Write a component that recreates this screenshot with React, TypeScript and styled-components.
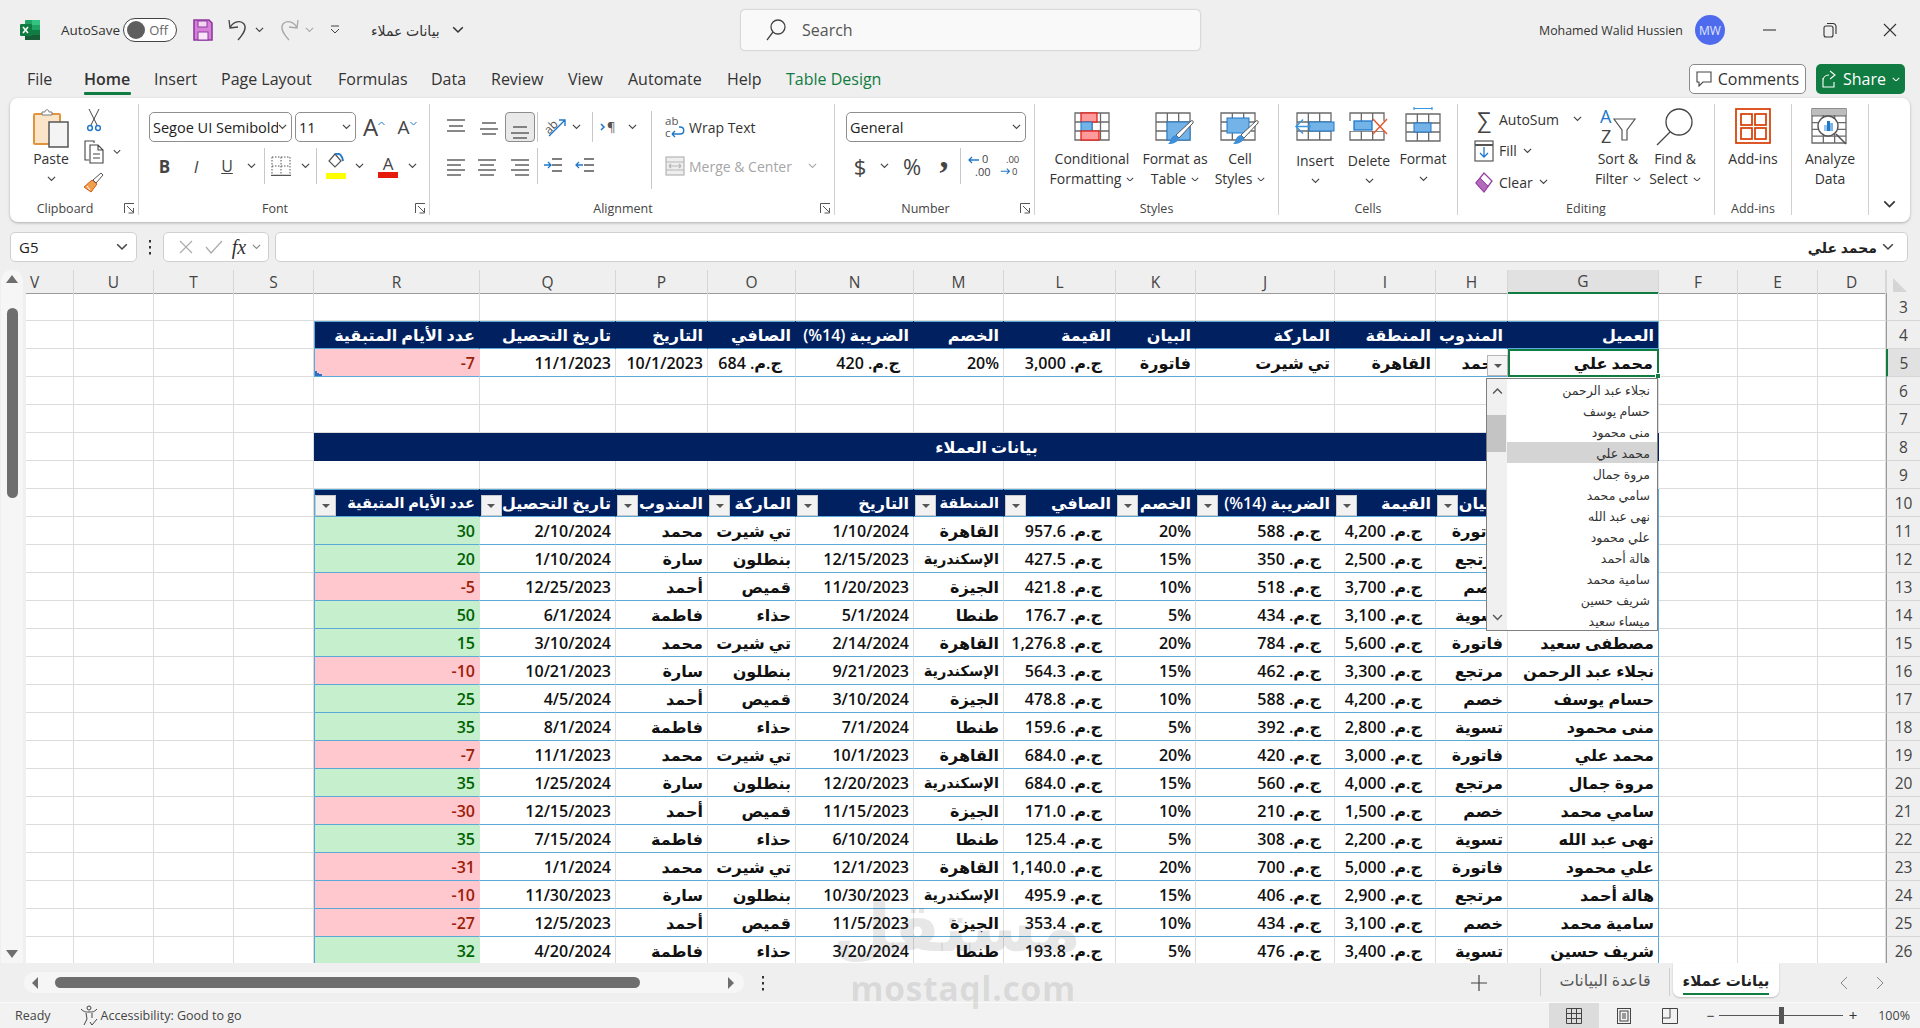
import React from 'react';
import styled, { createGlobalStyle, css } from 'styled-components';

const Global = createGlobalStyle`
  html, body { margin: 0; padding: 0; background: #efefef; }
  * { box-sizing: border-box; }
  body { font-family: "Open Sans", "DejaVu Sans", sans-serif; color: #262626; overflow: hidden; }
`;

const COLS = '48px 80px 80px 80px 166px 136px 92px 88px 118px 90px 112px 80px 139px 101px 72px 151px 79px 80px 68px 34px';
const BLUE = '#5aa9d6';
const NAVY = '#002060';

/* ---------- frame ---------- */
const Page = styled.div`
  position: relative; width: 1920px; height: 1028px; overflow: hidden;
  display: flex; flex-direction: column; background: #efefef;
`;
const TitleBar = styled.div`height: 60px; display: flex; align-items: center; padding-left: 20px; font-size: 13.5px;`;
const Gap = styled.div<{ $w: number; $h?: number }>`width: ${p => p.$w}px; flex: none; ${p => p.$h !== undefined && `height: ${p.$h}px;`}`;
const Grow = styled.div`flex: 1;`;
const AutoSaveLabel = styled.span`width: 58px; color: #333;`;
const Toggle = styled.div`
  width: 54px; height: 24px; border: 1px solid #444; border-radius: 12px; background: #fff;
  display: flex; align-items: center; justify-content: space-between; padding: 0 8px 0 3px; color: #666; font-size: 13px;
`;
const Knob = styled.div`width: 18px; height: 18px; border-radius: 50%; background: #5e5e5e;`;
const Slot = styled.div<{ $w: number; $on?: boolean }>`
  width: ${p => p.$w}px; flex: none; height: 100%; display: flex; align-items: center; justify-content: center;
  ${p => p.$on && css`background: #e9e9e9; border: 1px solid #8c8c8c; border-radius: 4px;`}
`;
const TitleSlot = styled(Slot)`height: 30px;`;
const DocName = styled.span`width: 80px; font-size: 14px; color: #333; direction: rtl; text-align: left; white-space: nowrap;`;
const SearchBox = styled.div`
  width: 459px; height: 40px; background: #f9f9f9; border-radius: 4px; box-shadow: 0 0 2px rgba(0,0,0,.35);
  display: flex; align-items: center; padding-left: 24px; gap: 15px; font-size: 16px; color: #555;
`;
const UserName = styled.span`font-size: 12.4px; color: #333; width: 156px; white-space: nowrap;`;
const Avatar = styled.div`
  width: 30px; height: 30px; border-radius: 50%; background: #4f6bed; color: #dfe6ff;
  display: flex; align-items: center; justify-content: center; font-size: 12px;
`;

const TabBar = styled.div`height: 38px; display: flex; align-items: center; padding-left: 27px;`;
const MenuTab = styled.div<{ $w: number; $on?: boolean; $green?: boolean }>`
  position: relative; width: ${p => p.$w}px; flex: none; font-size: 16px; line-height: 38px; height: 38px; white-space: nowrap;
  color: ${p => (p.$green ? '#107c41' : '#333')};
  font-weight: ${p => (p.$on ? 600 : 400)};
  ${p => p.$on && css`&::after { content: ''; position: absolute; left: 0; width: 47px; bottom: 3px; height: 3px; background: #107c41; border-radius: 1px; }`}
`;
const CommentsBtn = styled.div`
  width: 117px; height: 30px; background: #fff; border: 1px solid #8a8a8a; border-radius: 5px;
  display: flex; align-items: center; justify-content: center; gap: 6px; font-size: 16px; color: #333;
`;
const ShareBtn = styled.div`
  width: 89px; height: 30px; margin: 0 15px 0 10px; background: #107c41; border-radius: 5px; color: #fff;
  display: flex; align-items: center; justify-content: center; gap: 6px; font-size: 16px;
`;

/* ---------- ribbon ---------- */
const Ribbon = styled.div`
  height: 124px; margin: 0 10px; background: #fff; border-radius: 8px; box-shadow: 0 1px 3px rgba(0,0,0,.28); display: flex; flex: none;
`;
const Group = styled.div<{ $w: number; $last?: boolean }>`
  width: ${p => p.$w}px; flex: none; height: 111px; margin-top: 6px; display: flex; flex-direction: column;
  ${p => !p.$last && 'border-right: 1px solid #d0d0d0;'}
`;
const Body = styled.div<{ $pl?: number }>`height: 96px; padding: 8px 0 0 ${p => p.$pl ?? 0}px; display: flex; font-size: 14px; color: #333; white-space: nowrap;`;
const GroupLabel = styled.div<{ $launch?: boolean }>`
  position: relative; height: 15px; line-height: 18px; text-align: center; font-size: 12.5px; color: #444;
  padding-right: ${p => (p.$launch ? 18 : 0)}px;
`;
const Launcher = styled.span<{ $r: number }>`position: absolute; right: ${p => p.$r}px; top: 3px; line-height: 0;`;
const Stack = styled.div<{ $gap?: number }>`display: flex; flex-direction: column; gap: ${p => p.$gap ?? 8}px;`;
const RibRow = styled.div<{ $h: number }>`display: flex; align-items: center; height: ${p => p.$h}px;`;
const Combo = styled.div<{ $w: number }>`
  width: ${p => p.$w}px; height: 30px; flex: none; border: 1px solid #8f8f8f; border-radius: 5px; display: flex; align-items: center;
  padding: 0 4px 0 3px; font-size: 14.5px; color: #222;
`;
const ComboText = styled.span`flex: 1; overflow: hidden; white-space: nowrap;`;
const VSep = styled.div<{ $h: number }>`width: 1px; flex: none; height: ${p => p.$h}px; background: #c9c9c9;`;
const TallSep = styled(VSep)`margin-top: -1px;`;
const Glyph = styled.span<{ $s: number; $c?: string; $w?: number; $i?: boolean; $f?: string }>`
  font-size: ${p => p.$s}px; color: ${p => p.$c ?? '#333'}; font-weight: ${p => p.$w ?? 400}; font-style: ${p => (p.$i ? 'italic' : 'normal')};
  font-family: ${p => p.$f ?? 'inherit'}; line-height: 1;
`;
const ColorLetter = styled(Glyph)`display: block; text-align: center;`;
const CommaGlyph = styled(Glyph)`transform: translateY(-11px);`;
const Big = styled.div<{ $w: number }>`
  width: ${p => p.$w}px; flex: none; display: flex; flex-direction: column; align-items: center; text-align: center; line-height: 20px; white-space: nowrap;
  font-size: 14px;
`;
const BigIcon = styled.div<{ $h: number; $up?: number }>`
  height: ${p => p.$h}px; margin-top: ${p => -(p.$up ?? 0)}px; display: flex; justify-content: center; align-items: flex-start; flex: none;
`;
const LabelChev = styled.div`display: flex; align-items: center; gap: 5px; justify-content: center;`;
const ChevLine = styled.div`height: 20px; display: flex; align-items: center; justify-content: center;`;
const SmallCol = styled.div<{ $w: number; $top: number }>`width: ${p => p.$w}px; flex: none; margin-top: ${p => p.$top}px;`;
const SmallRow = styled.div<{ $h: number }>`height: ${p => p.$h}px; display: flex; align-items: center;`;
const MutedText = styled.span`color: #a6a6a6;`;
const CollapseBox = styled.div`flex: 1; display: flex; justify-content: center; align-items: flex-end; padding-bottom: 14px;`;

/* ---------- formula bar ---------- */
const FormulaBar = styled.div`height: 30px; margin: 10px 12px 8px 10px; display: flex; flex: none; align-items: center;`;
const FormulaPart = styled.div<{ $w?: number }>`
  ${p => (p.$w ? `width:${p.$w}px;flex:none;` : 'flex:1;')}
  height: 30px; background: #fff; border: 1px solid #d0d0d0; border-radius: 5px; display: flex; align-items: center; padding: 0 8px;
  font-size: 15px; color: #222;
`;
const FormulaText = styled.span`flex: 1; text-align: right; font-size: 14px; font-weight: 600; direction: rtl; padding-left: 8px;`;

/* ---------- sheet ---------- */
const SheetArea = styled.div`height: 693px; display: flex; flex: none;`;
const VScroll = styled.div`width: 26px; flex: none; display: flex; flex-direction: column; align-items: center; padding: 0 2px 0 0;`;
const VTrack = styled.div`
  width: 22px; height: 100%; background: #f6f6f6; border-radius: 10px 10px 0 0; display: flex; flex-direction: column; align-items: center;
`;
const ScrollThumbV = styled.div`width: 11px; height: 190px; margin-top: 22px; border-radius: 6px; background: #6e6e6e;`;
const Sheet = styled.div`flex: 1; position: relative; overflow: hidden; background: #fff;`;
const SheetRow = styled.div<{ $h?: number }>`display: grid; grid-template-columns: ${COLS}; height: ${p => p.$h ?? 28}px;`;
const ColHead = styled.div<{ $on?: boolean; $pr?: number }>`
  display: flex; align-items: center; justify-content: center; font-size: 15.5px; color: #444; background: ${p => (p.$on ? '#e1e1e1' : '#efefef')};
  border-right: 1px solid #d6d6d6; border-bottom: ${p => (p.$on ? '2px solid #107c41' : '1px solid #9a9a9a')};
  padding-right: ${p => p.$pr ?? 0}px;
`;
const Corner = styled.div`background: #efefef; border-bottom: 1px solid #9a9a9a; border-left: 1px solid #d6d6d6; padding: 8px 0 0 6px; line-height: 0;`;
const RowHead = styled.div<{ $on?: boolean }>`
  display: flex; align-items: center; justify-content: center; font-size: 15.5px; color: #444; background: ${p => (p.$on ? '#e1e1e1' : '#efefef')};
  border-bottom: 1px solid #d6d6d6; border-left: ${p => (p.$on ? '2px solid #107c41' : '1px solid #9a9a9a')};
`;
type CellP = { $head?: boolean; $tone?: 'good' | 'bad'; $line?: boolean; $top?: boolean; $first?: boolean; $last?: boolean; $money?: boolean; $tight?: boolean };
const Cell = styled.div<CellP>`
  position: relative; direction: rtl; display: flex; align-items: center; padding: 0 ${p => (p.$money ? 13 : 4)}px 0 2px; white-space: nowrap; overflow: hidden;
  font-size: ${p => (p.$tight ? 14.5 : 16)}px; font-weight: 600; color: #111;
  border-right: 1px solid #dcdcdc; border-bottom: 1px solid #dcdcdc;
  ${p => p.$line && `border-bottom-color: ${BLUE};`}
  ${p => p.$head && css`background: ${NAVY}; color: #fff; border-right-color: ${NAVY};`}
  ${p => p.$tone === 'good' && css`background: #c6efce; color: #006100; border-right-color: #c6efce;`}
  ${p => p.$tone === 'bad' && css`background: #ffc7ce; color: #9c2006; border-right-color: #ffc7ce;`}
  ${p => p.$last && `border-right-color: ${BLUE};`}
  ${p => (p.$top || p.$first) && `box-shadow: inset ${p.$first ? '1px' : '0'} ${p.$top ? '1px' : '0'} 0 ${BLUE}${p.$top && p.$first ? `, inset 0 1px 0 ${BLUE}` : ''};`}
`;
const Signed = styled.span`direction: ltr; unicode-bidi: isolate;`;
const ActiveCell = styled(Cell)`overflow: visible; z-index: 3; border: none; box-shadow: inset 0 0 0 2px #107c41; padding-right: 6px;`;
const FillHandle = styled.span`position: absolute; right: -2px; bottom: -2px; width: 6px; height: 6px; background: #107c41; border: 1px solid #fff;`;
const Banner = styled.div`
  grid-column: 5 / span 12; background: ${NAVY}; color: #fff; display: flex; align-items: center; justify-content: center;
  font-size: 16px; font-weight: 600; direction: rtl;
`;
const FilterBtn = styled.span`
  width: 21px; height: 21px; flex: none; margin: 6px auto 0 -1px; background: #f2f2f2; border: 1px solid #c9c9c9; display: flex; align-items: center; justify-content: center;
`;
const Arrow = styled.span`width: 0; height: 0; border-left: 4px solid transparent; border-right: 4px solid transparent; border-top: 4px solid #555;`;
const CellFilter = styled.span`
  position: absolute; right: 100%; top: 6px; width: 21px; height: 21px; background: #f4f4f4; border: 1px solid #b5b5b5;
  display: flex; align-items: center; justify-content: center;
`;
const Dropdown = styled.div`
  position: absolute; right: 1px; top: calc(100% + 1px); width: 172px; height: 253px; background: #fff; border: 1px solid #7f7f7f; display: flex; z-index: 5;
  font-weight: 400; color: #333; direction: ltr;
`;
const DropScroll = styled.div`width: 20px; flex: none; background: #f0f0f0; display: flex; flex-direction: column; align-items: center; justify-content: space-between; padding: 9px 0;`;
const FlipUp = styled.span`display: flex; transform: rotate(180deg);`;
const DropThumb = styled.div`width: 19px; height: 37px; background: #c4c4c4; position: absolute; left: 0; top: 36px;`;
const DropList = styled.div`flex: 1; direction: rtl;`;
const DropItem = styled.div<{ $on?: boolean }>`
  height: 21px; line-height: 23px; padding-right: 7px; font-size: 12.5px; background: ${p => (p.$on ? '#d4d4d4' : 'transparent')}; white-space: nowrap;
`;
const Marker = styled.span`position: absolute; left: 1px; bottom: 0; line-height: 0;`;

/* ---------- bottom ---------- */
const SheetBar = styled.div`height: 39px; flex: none; display: flex; align-items: flex-start; padding-left: 24px;`;
const HTrack = styled.div`
  width: 720px; height: 21px; margin-top: 9px; flex: none; background: #f6f6f6; border-radius: 10px; display: flex; align-items: center; padding: 0 6px;
`;
const HThumb = styled.div`width: 585px; height: 11px; margin: 0 auto 0 13px; border-radius: 6px; background: #6e6e6e;`;
const BarSlot = styled(Slot)`height: 39px;`;
const BarSep = styled.div`width: 1px; height: 28px; margin-top: 5px; background: #cfcfcf; flex: none;`;
const SheetTab = styled.div<{ $w: number; $on?: boolean }>`
  width: ${p => p.$w}px; flex: none; direction: rtl; text-align: center; position: relative;
  height: ${p => (p.$on ? 34 : 39)}px; line-height: 34px; font-size: ${p => (p.$on ? 15 : 16)}px; font-weight: ${p => (p.$on ? 700 : 400)};
  color: ${p => (p.$on ? '#222' : '#555')};
  ${p => p.$on && css`
    background: #fff; border-radius: 0 0 7px 7px; box-shadow: 0 1px 2px rgba(0,0,0,.2);
    &::after { content: ''; position: absolute; left: 10px; right: 10px; bottom: 2px; height: 2.5px; background: #107c41; }
  `}
`;
const StatusBar = styled.div`
  height: 26px; flex: none; border-top: 1px solid #fafafa; background: #f2f2f2; display: flex; align-items: center; font-size: 12.5px; color: #444; padding-left: 15px;
`;
const ViewBtn = styled.div<{ $w: number; $on?: boolean }>`
  width: ${p => p.$w}px; height: 25px; flex: none; display: flex; align-items: center; justify-content: center; background: ${p => (p.$on ? '#dcdcdc' : 'transparent')};
`;
const ZoomTrack = styled.div`position: relative; width: 124px; height: 1px; background: #555; flex: none;`;
const ZoomKnob = styled.span`position: absolute; left: 60px; top: -8px; width: 5px; height: 17px; background: #555;`;
const Pct = styled.span`font-size: 12.5px; margin-left: 21px;`;
const Watermark = styled.div`
  position: absolute; left: 845px; top: 880px; width: 236px; text-align: center; pointer-events: none; z-index: 9; color: rgba(70,70,70,.13); font-weight: 700;
`;
const MarkAr = styled.div`font-size: 68px; line-height: 90px; direction: rtl; white-space: nowrap;`;
const MarkEn = styled.div`font-size: 34px; line-height: 36px; letter-spacing: 0.5px; white-space: nowrap;`;

/* ---------- icons ---------- */
const Chev = ({ c = '#444', w = 9 }: { c?: string; w?: number }) => (
  <svg width={w} height={w * 0.6} viewBox="0 0 10 6" fill="none"><path d="M1 1l4 4 4-4" stroke={c} strokeWidth="1.3" /></svg>
);
const Launch = () => (
  <svg width="11" height="11" viewBox="0 0 11 11" fill="none" stroke="#555"><path d="M.5 10V.5H10M3 3l6 6M9.5 5v5h-5" /></svg>
);
const Lines = ({ ys, w = 20, h = 24, xs }: { ys: number[]; w?: number; h?: number; xs?: [number, number][] }) => (
  <svg width={w} height={h} viewBox={`0 0 ${w} ${h}`} stroke="#555" strokeWidth="1.4">
    {ys.map((y, i) => <path key={i} d={`M${xs ? xs[i][0] : 1} ${y}H${xs ? xs[i][1] : w - 1}`} />)}
  </svg>
);
const GridL = ({ x, y, w, h, c, r }: { x: number; y: number; w: number; h: number; c: number; r: number }) => {
  const d: string[] = [`M${x} ${y}h${w}v${h}h${-w}z`];
  for (let i = 1; i < c; i++) d.push(`M${x + (w * i) / c} ${y}v${h}`);
  for (let i = 1; i < r; i++) d.push(`M${x} ${y + (h * i) / r}h${w}`);
  return <path d={d.join('')} fill="none" stroke="#6a6a6a" strokeWidth="1.3" />;
};
const Brush = () => (
  <g>
    <path d="M36 9c1-1 3 0 2 2L24 26l-3-3z" fill="#fff" stroke="#555" />
    <path d="M21 23l3 3c-1 4-5 6-11 6 3-2 2-8 8-9z" fill="#3f8fd8" />
  </g>
);
const ExcelLogo = () => (
  <svg width="20" height="20" viewBox="0 0 20 20">
    <rect x="5" y="0" width="15" height="20" rx="1" fill="#21a366" />
    <rect x="12" y="10" width="8" height="5" fill="#107c41" /><rect x="5" y="10" width="7" height="5" fill="#185c37" />
    <rect x="5" y="15" width="15" height="5" fill="#185c37" /><rect x="12" y="0" width="8" height="5" fill="#33c481" />
    <rect x="0" y="4" width="12" height="12" rx="1" fill="#107c41" />
    <path d="M3 7l5 6M8 7l-5 6" stroke="#fff" strokeWidth="1.6" />
  </svg>
);
const SaveIcon = () => (
  <svg width="20" height="24" viewBox="0 0 20 24">
    <path d="M1 2h15l3 3v17H1z" fill="#d77fd9" stroke="#8e3a9e" strokeWidth="1.6" />
    <rect x="5" y="3" width="9" height="6" fill="#f4d6f4" stroke="#8e3a9e" /><rect x="5" y="14" width="10" height="8" fill="#f8e6f8" stroke="#8e3a9e" />
  </svg>
);
const Undo = ({ c }: { c: string }) => (
  <svg width="20" height="24" viewBox="0 0 20 24" fill="none" stroke={c} strokeWidth="1.3">
    <path d="M1 2l1 8 8-1M2 10C5 3 13 2 16 6c3 4 0 9-6 16" />
  </svg>
);
const Redo = ({ c }: { c: string }) => (
  <svg width="20" height="24" viewBox="0 0 20 24" fill="none" stroke={c} strokeWidth="1.3">
    <path d="M19 2l-1 8-8-1M18 10C15 3 7 2 4 6c-3 4 0 9 6 16" />
  </svg>
);
const PasteIcon = () => (
  <svg width="36" height="40" viewBox="0 0 36 40" fill="none">
    <rect x="1" y="6" width="26" height="30" rx="1" fill="#fbe5c8" stroke="#e0953c" strokeWidth="2" />
    <path d="M9 7V4h3c0-3 4-3 4 0h3v3z" fill="#fff" stroke="#7a7a7a" />
    <rect x="16" y="14" width="19" height="25" fill="#f4f4f4" stroke="#555" strokeWidth="1.5" />
  </svg>
);
const CutIcon = () => (
  <svg width="14" height="24" viewBox="0 0 14 24" fill="none" stroke="#444">
    <path d="M2 1l8 16M12 1L4 17" /><circle cx="3" cy="20" r="2.4" stroke="#1f78c8" strokeWidth="1.5" /><circle cx="11" cy="20" r="2.4" stroke="#1f78c8" strokeWidth="1.5" />
  </svg>
);
const CopyIcon = () => (
  <svg width="20" height="24" viewBox="0 0 20 24" fill="none" stroke="#444" strokeWidth="1.1">
    <path d="M10 3V1H1v19h4" /><path d="M6 5h8l5 5v13H6zM14 5v5h5M9 14h7M9 18h7" fill="#fff" />
  </svg>
);
const PainterIcon = () => (
  <svg width="20" height="22" viewBox="0 0 20 22">
    <path d="M8 8l5 4-6 8-7-5z" fill="#f0a04a" stroke="#d35a16" /><path d="M9 8l8-7 2 2-7 8z" fill="#fff" stroke="#555" /><path d="M3 14l3 4" stroke="#fff" />
  </svg>
);
const BorderIcon = () => (
  <svg width="20" height="20" viewBox="0 0 20 20" fill="none" stroke="#555" strokeDasharray="1.5 1.5">
    <path d="M1 1h18M1 10h18M1 1v18M10 1v18M19 1v18" /><path d="M0 19.5h20" strokeDasharray="none" strokeWidth="1.5" />
  </svg>
);
const ColorBar = ({ c }: { c: string }) => <svg width="20" height="6" display="block"><rect width="20" height="6" fill={c} /></svg>;
const Bucket = () => (
  <svg width="20" height="16" viewBox="0 0 20 16" fill="none">
    <path d="M9 1l6 7-6 6-6-6z" stroke="#555" strokeWidth="1.2" /><path d="M9 1c5-1 7 1 8 7" stroke="#1f78c8" strokeWidth="2" />
  </svg>
);
const Indent = ({ flip }: { flip?: boolean }) => (
  <svg width="20" height="20" viewBox="0 0 20 20" fill="none" stroke="#555" strokeWidth="1.3">
    <path d="M9 3h10M9 9h10M9 15h10" /><path d={flip ? 'M8 9H1m3-3L1 9l3 3' : 'M1 9h7M5 6l3 3-3 3'} stroke="#1f78c8" />
  </svg>
);
const OrientIcon = () => (
  <svg width="24" height="24" viewBox="0 0 24 24" fill="none">
    <text x="1" y="16" fontSize="12" fill="#555" transform="rotate(-45 8 12)" fontFamily="Open Sans">ab</text>
    <path d="M6 21L22 5M16 5h6v6" stroke="#1f78c8" strokeWidth="1.4" />
  </svg>
);
const RtlIcon = () => (
  <svg width="20" height="18" viewBox="0 0 20 18"><path d="M1 6l3 3-3 3" fill="none" stroke="#1f78c8" strokeWidth="1.5" /><text x="7" y="14" fontSize="13" fill="#555" fontFamily="Open Sans">¶</text></svg>
);
const WrapIcon = () => (
  <svg width="22" height="26" viewBox="0 0 22 26"><text x="1" y="11" fontSize="11.5" fill="#555" fontFamily="Open Sans">ab</text><text x="1" y="23" fontSize="11.5" fill="#555" fontFamily="Open Sans">c</text>
    <path d="M8 20h8c5 0 5-7 0-7h-1M8 20l3-3M8 20l3 3" fill="none" stroke="#1f78c8" strokeWidth="1.4" /></svg>
);
const MergeIcon = () => (
  <svg width="20" height="20" viewBox="0 0 20 20" fill="#eee" stroke="#b5b5b5" strokeWidth="1.2"><rect x="1" y="1" width="18" height="18" /><path d="M1 6h18M1 14h18M4 10h12M4 10l2-2M4 10l2 2M16 10l-2-2M16 10l-2 2" /></svg>
);
const DecIcon = ({ more }: { more?: boolean }) => (
  <svg width="30" height="28" viewBox="0 0 30 28" fontFamily="Open Sans" fontSize="11" fill="#444">
    <text x={more ? 15 : 8} y="11">{more ? '0' : '.00'}</text><text x={more ? 8 : 15} y="24">{more ? '.00' : '0'}</text>
    <path d={more ? 'M12 8H2m3-3L2 8l3 3' : 'M2 20h10m-3-3l3 3-3 3'} fill="none" stroke="#1f78c8" strokeWidth="1.3" />
  </svg>
);
const CFIcon = () => (
  <svg width="36" height="30" viewBox="0 0 36 30">
    <GridL x={1} y={1} w={34} h={27} c={4} r={3} />
    <rect x="7" y="1" width="16" height="9" fill="#ff9b9b" stroke="#e8201a" strokeWidth="1.3" />
    <rect x="7" y="10" width="11" height="9" fill="#74b3e8" stroke="#1f78c8" />
    <rect x="7" y="19" width="18" height="9" fill="#ff9b9b" stroke="#e8201a" strokeWidth="1.3" />
  </svg>
);
const FATIcon = () => (
  <svg width="40" height="36" viewBox="0 0 40 36">
    <GridL x={1} y={1} w={34} h={27} c={3} r={3} />
    <rect x="12" y="10" width="23" height="18" fill="#74b3e8" stroke="#1f78c8" /><Brush />
  </svg>
);
const CSIcon = () => (
  <svg width="40" height="36" viewBox="0 0 40 36">
    <GridL x={1} y={1} w={34} h={27} c={3} r={3} />
    <rect x="7" y="6" width="22" height="15" fill="#74b3e8" stroke="#1f78c8" /><Brush />
  </svg>
);
const InsertIcon = () => (
  <svg width="40" height="30" viewBox="0 0 40 30">
    <GridL x={2} y={1} w={34} h={27} c={3} r={3} />
    <rect x="14" y="10" width="25" height="9" fill="#74b3e8" stroke="#1f78c8" />
    <path d="M16 14.5H2m6-7l-7 7 7 7" fill="none" stroke="#3a95e0" strokeWidth="1.5" />
  </svg>
);
const DeleteIcon = () => (
  <svg width="40" height="30" viewBox="0 0 40 30">
    <GridL x={1} y={1} w={34} h={27} c={3} r={3} />
    <rect x="0" y="9" width="39" height="10" fill="#fff" />
    <rect x="5" y="9" width="18" height="9" fill="#74b3e8" stroke="#1f78c8" strokeWidth="1.3" />
    <path d="M24 7l14 15M38 7L24 22" stroke="#e8562a" strokeWidth="1.4" />
  </svg>
);
const FormatIcon = () => (
  <svg width="36" height="36" viewBox="0 0 36 36">
    <GridL x={1} y={8} w={34} h={27} c={3} r={3} />
    <rect x="9" y="17" width="17" height="9" fill="#74b3e8" stroke="#1f78c8" />
    <path d="M9 1v3M27 1v3M9 2.5h18" stroke="#3a95e0" strokeWidth="1.2" />
  </svg>
);
const FillIcon = () => (
  <svg width="20" height="22" viewBox="0 0 20 22" fill="none"><rect x="1" y="1" width="18" height="20" stroke="#555" strokeWidth="1.2" /><path d="M1 5h18" stroke="#555" strokeWidth="2" /><path d="M10 7v10m-4-4l4 4 4-4" stroke="#1f78c8" strokeWidth="1.3" /></svg>
);
const ClearIcon = () => (
  <svg width="20" height="24" viewBox="0 0 20 24"><path d="M2 13l8-10 8 8-8 11z" fill="#fff" stroke="#9a3fa6" strokeWidth="1.3" /><path d="M2 13l4-5 8 8-4 6z" fill="#b26cbb" stroke="#9a3fa6" /></svg>
);
const SortIcon = () => (
  <svg width="38" height="36" viewBox="0 0 38 36" fontFamily="Open Sans" fontSize="18">
    <text x="1" y="15" fill="#1f78c8">A</text><text x="2" y="35" fill="#444">Z</text>
    <path d="M15 11h21l-8 11v10l-5 0V22z" fill="#fff" stroke="#555" strokeWidth="1.2" />
  </svg>
);
const FindIcon = () => (
  <svg width="38" height="38" viewBox="0 0 38 38" fill="none" stroke="#444" strokeWidth="1.3"><circle cx="23" cy="14" r="13" /><path d="M14 24L1 37" /></svg>
);
const AddinsIcon = () => (
  <svg width="36" height="36" viewBox="0 0 36 36" fill="none" stroke="#d83b01" strokeWidth="1.7">
    <rect x="1" y="1" width="34" height="34" /><rect x="6" y="6" width="11" height="11" /><rect x="20" y="6" width="11" height="11" /><rect x="6" y="20" width="11" height="11" /><rect x="20" y="20" width="11" height="11" />
  </svg>
);
const AnalyzeIcon = () => (
  <svg width="38" height="37" viewBox="0 0 38 37">
    <GridL x={1} y={1} w={34} h={34} c={3} r={5} />
    <rect x="1" y="1" width="34" height="6" fill="#bdbdbd" />
    <circle cx="17" cy="18" r="10" fill="#fff" stroke="#555" strokeWidth="1.4" />
    <rect x="13" y="17" width="3" height="6" fill="#9cc6ee" /><rect x="16" y="13" width="3" height="10" fill="#1f78c8" /><rect x="19" y="15" width="3" height="8" fill="#7fb4e6" />
    <path d="M25 26l10 10" stroke="#555" strokeWidth="1.6" />
  </svg>
);
const SearchGlyph = () => (
  <svg width="22" height="24" viewBox="0 0 22 24" fill="none" stroke="#444" strokeWidth="1.3"><circle cx="13" cy="9" r="7" /><path d="M8 14l-6 8" /></svg>
);
const Tri = ({ d }: { d: 'u' | 'd' | 'l' | 'r' }) => {
  const p = { u: 'M0 9L6 1l6 8z', d: 'M0 1l6 8 6-8z', l: 'M8 0v12L2 6z', r: 'M2 0v12l6-6z' }[d];
  return <svg width="12" height="12" viewBox="0 0 12 12"><path d={p} fill="#6e6e6e" /></svg>;
};
const Dots = () => (
  <svg width="4" height="16" viewBox="0 0 4 16" fill="#333"><rect x="1" y="1" width="2" height="2.5" /><rect x="1" y="7" width="2" height="2.5" /><rect x="1" y="13" width="2" height="2.5" /></svg>
);
const WinBtn = ({ k, c = '#333' }: { k: 'min' | 'res' | 'x'; c?: string }) => (
  <svg width="16" height="16" viewBox="0 0 16 16" fill="none" stroke={c} strokeWidth="1.1">
    {k === 'min' && <path d="M1 8h13" />}
    {k === 'res' && <><rect x="2" y="4" width="9" height="11" rx="2" /><path d="M5 1.5h6a3 3 0 0 1 3 3V12" /></>}
    {k === 'x' && <path d="M2 2l12 12M14 2L2 14" />}
  </svg>
);
const CommentGlyph = () => (
  <svg width="16" height="16" viewBox="0 0 16 16" fill="none" stroke="#444" strokeWidth="1.1"><path d="M1 1h14v10H7l-4 4v-4H1z" /></svg>
);
const ShareGlyph = () => (
  <svg width="16" height="18" viewBox="0 0 16 18" fill="none" stroke="#fff" strokeWidth="1.1"><path d="M8 5c-4 0-6 3-6 6M9 1l5 4-5 4M2 8v9h11v-5" /></svg>
);
const A11y = () => (
  <svg width="20" height="22" viewBox="0 0 20 22" fill="none" stroke="#444"><circle cx="9" cy="3" r="2" /><path d="M1 4c3 3 4 3 8 3s5 0 8-3M6 8l1 6-3 6M12 8v5M10 17l2 3 5-6" /></svg>
);
const ViewGrid = () => (
  <svg width="16" height="16" viewBox="0 0 16 16" fill="none" stroke="#444"><path d="M.5.5h15v15H.5zM.5 5.500h15M.5 10.500h15M5.500.5v15M10.500.5v15" /></svg>
);
const ViewPage = () => (
  <svg width="14" height="16" viewBox="0 0 14 16" fill="none" stroke="#444"><rect x=".5" y=".5" width="13" height="15" /><rect x="3" y="3" width="8" height="10" /><path d="M5 6h4M5 8h4M5 10h4" /></svg>
);
const ViewBreak = () => (
  <svg width="16" height="16" viewBox="0 0 16 16" fill="none" stroke="#444"><path d="M.5.5h15v15H.5zM8 .5V10M.5 10h7.500" /></svg>
);

/* ---------- data ---------- */
const HEAD_TOP = ['العميل', 'المندوب', 'المنطقة', 'الماركة', 'البيان', 'القيمة', 'الخصم', 'الضريبة (14%)', 'الصافي', 'التاريخ', 'تاريخ التحصيل', 'عدد الأيام المتبقية'];
const HEAD_TBL = ['العميل', 'البيان', 'القيمة', 'الضريبة (14%)', 'الخصم', 'الصافي', 'المنطقة', 'التاريخ', 'الماركة', 'المندوب', 'تاريخ التحصيل', 'عدد الأيام المتبقية'];
const M = 'ج.م. ';
type Row = [string, string, string, string, string, string, string, string, string, string, string, number];
const ROWS: Row[] = [
  ['', 'فاتورة', '4,200', '588', '20%', '957.6', 'القاهرة', '1/10/2024', 'تي شيرت', 'محمد', '2/10/2024', 30],
  ['', 'مرتجع', '2,500', '350', '15%', '427.5', 'الإسكندرية', '12/15/2023', 'بنطلون', 'سارة', '1/10/2024', 20],
  ['', 'خصم', '3,700', '518', '10%', '421.8', 'الجيزة', '11/20/2023', 'قميص', 'أحمد', '12/25/2023', -5],
  ['', 'تسوية', '3,100', '434', '5%', '176.7', 'طنطا', '5/1/2024', 'حذاء', 'فاطمة', '6/1/2024', 50],
  ['مصطفى سعيد', 'فاتورة', '5,600', '784', '20%', '1,276.8', 'القاهرة', '2/14/2024', 'تي شيرت', 'محمد', '3/10/2024', 15],
  ['نجلاء عبد الرحمن', 'مرتجع', '3,300', '462', '15%', '564.3', 'الإسكندرية', '9/21/2023', 'بنطلون', 'سارة', '10/21/2023', -10],
  ['حسام يوسف', 'خصم', '4,200', '588', '10%', '478.8', 'الجيزة', '3/10/2024', 'قميص', 'أحمد', '4/5/2024', 25],
  ['منى محمود', 'تسوية', '2,800', '392', '5%', '159.6', 'طنطا', '7/1/2024', 'حذاء', 'فاطمة', '8/1/2024', 35],
  ['محمد علي', 'فاتورة', '3,000', '420', '20%', '684.0', 'القاهرة', '10/1/2023', 'تي شيرت', 'محمد', '11/1/2023', -7],
  ['مروة جمال', 'مرتجع', '4,000', '560', '15%', '684.0', 'الإسكندرية', '12/20/2023', 'بنطلون', 'سارة', '1/25/2024', 35],
  ['سامي محمد', 'خصم', '1,500', '210', '10%', '171.0', 'الجيزة', '11/15/2023', 'قميص', 'أحمد', '12/15/2023', -30],
  ['نهى عبد الله', 'تسوية', '2,200', '308', '5%', '125.4', 'طنطا', '6/10/2024', 'حذاء', 'فاطمة', '7/15/2024', 35],
  ['علي محمود', 'فاتورة', '5,000', '700', '20%', '1,140.0', 'القاهرة', '12/1/2023', 'تي شيرت', 'محمد', '1/1/2024', -31],
  ['هالة أحمد', 'مرتجع', '2,900', '406', '15%', '495.9', 'الإسكندرية', '10/30/2023', 'بنطلون', 'سارة', '11/30/2023', -10],
  ['سامية محمد', 'خصم', '3,100', '434', '10%', '353.4', 'الجيزة', '11/5/2023', 'قميص', 'أحمد', '12/5/2023', -27],
  ['شريف حسين', 'تسوية', '3,400', '476', '5%', '193.8', 'طنطا', '3/20/2024', 'حذاء', 'فاطمة', '4/20/2024', 32],
];
const LETTERS = ['V', 'U', 'T', 'S', 'R', 'Q', 'P', 'O', 'N', 'M', 'L', 'K', 'J', 'I', 'H', 'G', 'F', 'E', 'D'];
const LIST = ['نجلاء عبد الرحمن', 'حسام يوسف', 'منى محمود', 'محمد علي', 'مروة جمال', 'سامي محمد', 'نهى عبد الله', 'علي محمود', 'هالة أحمد', 'سامية محمد', 'شريف حسين', 'ميساء سعيد'];
const MENU: [string, number, boolean?, boolean?][] = [
  ['File', 57], ['Home', 70, true], ['Insert', 67], ['Page Layout', 117], ['Formulas', 93], ['Data', 60], ['Review', 77], ['View', 60], ['Automate', 99], ['Help', 59], ['Table Design', 100, false, true],
];

const Blanks = ({ n, k }: { n: number; k: string }) => <>{Array.from({ length: n }, (_, i) => <Cell key={k + i} />)}</>;

const Plain = ({ n }: { n: number }) => (
  <SheetRow><Blanks n={19} k="b" /><RowHead>{n}</RowHead></SheetRow>
);

const BigBtn = ({ w, h = 37, up, icon, l1, l2, chev, sub }: { w: number; h?: number; up?: number; icon: React.ReactNode; l1: string; l2?: string; chev?: boolean; sub?: boolean }) => (
  <Big $w={w}>
    <BigIcon $h={h} $up={up}>{icon}</BigIcon>
    {l2 ? <><div>{l1}</div><LabelChev>{l2}{chev && <Chev w={8} />}</LabelChev></> : (
      <LabelChev>{l1}{chev && !sub && <Chev w={8} />}</LabelChev>
    )}
    {sub && <ChevLine><Chev /></ChevLine>}
  </Big>
);

export default function App() {
  return (
    <Page>
      <Global />
      <TitleBar>
        <ExcelLogo />
        <Gap $w={21} />
        <AutoSaveLabel>AutoSave</AutoSaveLabel>
        <Gap $w={4} />
        <Toggle><Knob />Off</Toggle>
        <Gap $w={16} />
        <SaveIcon />
        <Gap $w={15} />
        <TitleSlot $w={20}><Undo c="#444" /></TitleSlot>
        <TitleSlot $w={22}><Chev /></TitleSlot>
        <Gap $w={8} />
        <TitleSlot $w={22}><Redo c="#a8a8a8" /></TitleSlot>
        <TitleSlot $w={18}><Chev c="#aaa" /></TitleSlot>
        <TitleSlot $w={34}>
          <svg width="10" height="10" viewBox="0 0 10 10" fill="none" stroke="#444"><path d="M1 1h8M1 4l4 4 4-4" /></svg>
        </TitleSlot>
        <Gap $w={19} />
        <DocName>بيانات عملاء</DocName>
        <TitleSlot $w={14}><Chev c="#333" w={12} /></TitleSlot>
        <Gap $w={276} />
        <SearchBox><SearchGlyph />Search</SearchBox>
        <Grow />
        <UserName>Mohamed Walid Hussien</UserName>
        <Avatar>MW</Avatar>
        <Gap $w={30} />
        <TitleSlot $w={30}><WinBtn k="min" /></TitleSlot>
        <Gap $w={30} />
        <TitleSlot $w={30}><WinBtn k="res" /></TitleSlot>
        <Gap $w={30} />
        <TitleSlot $w={30}><WinBtn k="x" /></TitleSlot>
        <Gap $w={15} />
      </TitleBar>

      <TabBar>
        {MENU.map(([t, w, on, g]) => <MenuTab key={t} $w={w} $on={on} $green={g}>{t}</MenuTab>)}
        <Grow />
        <CommentsBtn><CommentGlyph />Comments</CommentsBtn>
        <ShareBtn><ShareGlyph />Share<Chev c="#fff" w={8} /></ShareBtn>
      </TabBar>

      <Ribbon>
        <Group $w={129}>
          <Body $pl={17}>
            <Big $w={48}>
              <BigIcon $h={41} $up={4}><PasteIcon /></BigIcon>
              <div>Paste</div>
              <ChevLine><Chev /></ChevLine>
            </Big>
            <SmallCol $w={50} $top={-8}>
              <SmallRow $h={32}><Slot $w={38}><CutIcon /></Slot></SmallRow>
              <SmallRow $h={31}><Slot $w={38}><CopyIcon /></Slot><Slot $w={8}><Chev /></Slot></SmallRow>
              <SmallRow $h={31}><Slot $w={38}><PainterIcon /></Slot></SmallRow>
            </SmallCol>
          </Body>
          <GroupLabel $launch>Clipboard<Launcher $r={3}><Launch /></Launcher></GroupLabel>
        </Group>

        <Group $w={291}>
          <Body $pl={10}>
            <Stack>
              <RibRow $h={30}>
                <Combo $w={143}><ComboText>Segoe UI Semibold</ComboText><Chev /></Combo>
                <Gap $w={3} />
                <Combo $w={61}><ComboText>11</ComboText><Chev /></Combo>
                <Slot $w={36}><Glyph $s={24} $c="#444">A</Glyph><svg width="7" height="14" viewBox="0 0 7 14" fill="none"><path d="M.5 5L3.500 2l3 3" stroke="#1f78c8" /></svg></Slot>
                <Slot $w={30}><Glyph $s={19} $c="#444">A</Glyph><svg width="7" height="14" viewBox="0 0 7 14" fill="none"><path d="M.5 2L3.500 5l3-3" stroke="#1f78c8" /></svg></Slot>
              </RibRow>
              <RibRow $h={32}>
                <Slot $w={31}><Glyph $s={17} $w={700} $c="#444">B</Glyph></Slot>
                <Slot $w={32}><Glyph $s={17} $i $c="#444">I</Glyph></Slot>
                <Slot $w={30}><Glyph $s={16} $c="#444"><u>U</u></Glyph></Slot>
                <Slot $w={18}><Chev /></Slot>
                <Gap $w={4} /><VSep $h={36} /><Gap $w={3} />
                <Slot $w={26}><BorderIcon /></Slot>
                <Slot $w={22}><Chev /></Slot>
                <VSep $h={36} /><Gap $w={3} />
                <Slot $w={32}><div><Bucket /><ColorBar c="#ffff00" /></div></Slot>
                <Slot $w={14}><Chev /></Slot>
                <Gap $w={3} />
                <Slot $w={38}><div><ColorLetter $s={17} $c="#444">A</ColorLetter><ColorBar c="#e51b0b" /></div></Slot>
                <Slot $w={10}><Chev /></Slot>
              </RibRow>
            </Stack>
          </Body>
          <GroupLabel $launch>Font<Launcher $r={3}><Launch /></Launcher></GroupLabel>
        </Group>

        <Group $w={405}>
          <Body $pl={10}>
            <Stack>
              <RibRow $h={30}>
                <Slot $w={32}><Lines ys={[5, 11, 16]} xs={[[1, 19], [3, 17], [1, 19]]} /></Slot>
                <Slot $w={33}><Lines ys={[8, 14, 19]} xs={[[3, 17], [1, 19], [3, 17]]} /></Slot>
                <Slot $w={30} $on><Lines ys={[12, 18, 23]} xs={[[3, 17], [1, 19], [3, 17]]} /></Slot>
                <Gap $w={2} /><VSep $h={30} /><Gap $w={2} />
                <Slot $w={30}><OrientIcon /></Slot>
                <Slot $w={12}><Chev /></Slot>
                <Gap $w={10} /><VSep $h={30} />
                <Slot $w={34}><RtlIcon /></Slot>
                <Slot $w={10}><Chev /></Slot>
              </RibRow>
              <RibRow $h={32}>
                <Slot $w={31}><Lines ys={[6, 11, 16, 21]} xs={[[1, 19], [1, 15], [1, 19], [1, 15]]} /></Slot>
                <Slot $w={32}><Lines ys={[6, 11, 16, 21]} xs={[[1, 19], [3, 17], [1, 19], [3, 17]]} /></Slot>
                <Slot $w={34}><Lines ys={[6, 11, 16, 21]} xs={[[1, 19], [5, 19], [1, 19], [5, 19]]} /></Slot>
                <VSep $h={36} />
                <Slot $w={30}><Indent /></Slot>
                <Gap $w={2} />
                <Slot $w={30}><Indent flip /></Slot>
              </RibRow>
            </Stack>
            <Gap $w={14} />
            <TallSep $h={78} />
            <Gap $w={12} />
            <Stack>
              <RibRow $h={30}><Slot $w={22}><WrapIcon /></Slot><Gap $w={3} />Wrap Text</RibRow>
              <RibRow $h={32}><Slot $w={22}><MergeIcon /></Slot><Gap $w={3} /><MutedText>Merge &amp; Center</MutedText><Gap $w={16} /><Chev c="#aaa" /></RibRow>
            </Stack>
          </Body>
          <GroupLabel $launch>Alignment<Launcher $r={3}><Launch /></Launcher></GroupLabel>
        </Group>

        <Group $w={200}>
          <Body $pl={11}>
            <Stack>
              <RibRow $h={30}><Combo $w={180}><ComboText>General</ComboText><Chev /></Combo></RibRow>
              <RibRow $h={32}>
                <Slot $w={28}><Glyph $s={22} $c="#444">$</Glyph></Slot>
                <Slot $w={20}><Chev /></Slot>
                <Slot $w={36}><Glyph $s={22} $c="#444">%</Glyph></Slot>
                <Slot $w={28}><CommaGlyph $s={36} $w={700} $c="#444" $f='"Liberation Serif", serif'>,</CommaGlyph></Slot>
                <Gap $w={2} /><VSep $h={36} /><Gap $w={4} />
                <Slot $w={34}><DecIcon more /></Slot>
                <Slot $w={26}><DecIcon /></Slot>
              </RibRow>
            </Stack>
          </Body>
          <GroupLabel $launch>Number<Launcher $r={3}><Launch /></Launcher></GroupLabel>
        </Group>

        <Group $w={244}>
          <Body $pl={11}>
            <BigBtn w={92} icon={<CFIcon />} l1="Conditional" l2="Formatting" chev />
            <BigBtn w={74} icon={<FATIcon />} l1="Format as" l2="Table" chev />
            <BigBtn w={56} icon={<CSIcon />} l1="Cell" l2="Styles" chev />
          </Body>
          <GroupLabel>Styles</GroupLabel>
        </Group>

        <Group $w={179}>
          <Body $pl={9}>
            <BigBtn w={54} h={39} icon={<InsertIcon />} l1="Insert" sub />
            <BigBtn w={54} h={39} icon={<DeleteIcon />} l1="Delete" sub />
            <BigBtn w={54} h={43} up={6} icon={<FormatIcon />} l1="Format" sub />
          </Body>
          <GroupLabel>Cells</GroupLabel>
        </Group>

        <Group $w={257}>
          <Body $pl={14}>
            <SmallCol $w={118} $top={-9}>
              <SmallRow $h={32}><Slot $w={24}><Glyph $s={22} $c="#444">∑</Glyph></Slot><Gap $w={3} />AutoSum<Gap $w={14} /><Chev /></SmallRow>
              <SmallRow $h={31}><Slot $w={24}><FillIcon /></Slot><Gap $w={3} />Fill<Gap $w={6} /><Chev /></SmallRow>
              <SmallRow $h={32}><Slot $w={24}><ClearIcon /></Slot><Gap $w={3} />Clear<Gap $w={6} /><Chev /></SmallRow>
            </SmallCol>
            <BigBtn w={56} h={41} up={4} icon={<SortIcon />} l1="Sort &" l2="Filter" chev />
            <BigBtn w={58} h={41} up={4} icon={<FindIcon />} l1="Find &" l2="Select" chev />
          </Body>
          <GroupLabel>Editing</GroupLabel>
        </Group>

        <Group $w={77}>
          <Body><BigBtn w={76} h={41} up={4} icon={<AddinsIcon />} l1="Add-ins" /></Body>
          <GroupLabel>Add-ins</GroupLabel>
        </Group>

        <Group $w={77}>
          <Body><BigBtn w={76} h={41} up={4} icon={<AnalyzeIcon />} l1="Analyze" l2="Data" /></Body>
          <GroupLabel />
        </Group>

        <CollapseBox><Chev w={13} c="#333" /></CollapseBox>
      </Ribbon>

      <FormulaBar>
        <FormulaPart $w={127}><ComboText>G5</ComboText><Chev w={12} /></FormulaPart>
        <Slot $w={26}><Dots /></Slot>
        <FormulaPart $w={106}>
          <Slot $w={28}><WinBtn k="x" c="#aaa" /></Slot>
          <Slot $w={28}><svg width="18" height="14" viewBox="0 0 18 14" fill="none" stroke="#aaa" strokeWidth="1.2"><path d="M1 7l5 6L17 1" /></svg></Slot>
          <Slot $w={22}><Glyph $s={20} $i $c="#333" $f='"Liberation Serif", serif'>fx</Glyph></Slot>
          <Slot $w={12}><Chev c="#888" /></Slot>
        </FormulaPart>
        <Gap $w={6} />
        <FormulaPart><FormulaText>محمد علي</FormulaText><Slot $w={22}><Chev w={12} /></Slot></FormulaPart>
      </FormulaBar>

      <SheetArea>
        <VScroll>
          <VTrack>
            <Gap $w={0} $h={4} />
            <Tri d="u" />
            <ScrollThumbV />
            <Grow />
            <Tri d="d" />
            <Gap $w={0} $h={2} />
          </VTrack>
        </VScroll>
        <Sheet>
          <SheetRow $h={23}>
            {LETTERS.map(l => <ColHead key={l} $on={l === 'G'} $pr={l === 'V' ? 30 : 0}>{l}</ColHead>)}
            <Corner><svg width="14" height="14"><path d="M14 14H0V0z" fill="#d5d5d5" /></svg></Corner>
          </SheetRow>
          <Plain n={3} />

          <SheetRow>
            <Blanks n={4} k="l" />
            {[...HEAD_TOP].reverse().map((t, i) => <Cell key={i} $head $top $line $first={i === 0} $last={i === 11}>{t}</Cell>)}
            <Blanks n={3} k="r" />
            <RowHead>4</RowHead>
          </SheetRow>

          <SheetRow>
            <Blanks n={4} k="l" />
            <Cell $line $tone="bad" $first><Signed>-7</Signed><Marker><svg width="7" height="5"><path d="M0 0h2v2h2v1h3v2H0z" fill="#2f6fc4" /></svg></Marker></Cell>
            <Cell $line>11/1/2023</Cell>
            <Cell $line>10/1/2023</Cell>
            <Cell $line $money>{M}684</Cell>
            <Cell $line $money>{M}420</Cell>
            <Cell $line>20%</Cell>
            <Cell $line $money>{M}3,000</Cell>
            <Cell $line>فاتورة</Cell>
            <Cell $line>تي شيرت</Cell>
            <Cell $line>القاهرة</Cell>
            <Cell $line>محمد</Cell>
            <ActiveCell>
              محمد علي
              <FillHandle />
              <CellFilter><Arrow /></CellFilter>
              <Dropdown>
                <DropScroll>
                  <DropThumb />
                  <FlipUp><Chev c="#555" w={11} /></FlipUp>
                  <Chev c="#555" w={11} />
                </DropScroll>
                <DropList>
                  {LIST.map(n => <DropItem key={n} $on={n === 'محمد علي'}>{n}</DropItem>)}
                </DropList>
              </Dropdown>
            </ActiveCell>
            <Blanks n={3} k="r" />
            <RowHead $on>5</RowHead>
          </SheetRow>

          <Plain n={6} />
          <Plain n={7} />

          <SheetRow>
            <Blanks n={4} k="l" />
            <Banner>بيانات العملاء</Banner>
            <Blanks n={3} k="r" />
            <RowHead>8</RowHead>
          </SheetRow>

          <Plain n={9} />

          <SheetRow>
            <Blanks n={4} k="l" />
            {[...HEAD_TBL].reverse().map((t, i) => (
              <Cell key={i} $head $top $line $first={i === 0} $last={i === 11} $tight={i === 0 || i === 5}>{t}<FilterBtn><Arrow /></FilterBtn></Cell>
            ))}
            <Blanks n={3} k="r" />
            <RowHead>10</RowHead>
          </SheetRow>

          {ROWS.map((r, i) => {
            const last = r[11];
            return (
              <SheetRow key={i}>
                <Blanks n={4} k="l" />
                <Cell $line $first $tone={last < 0 ? 'bad' : 'good'}><Signed>{last}</Signed></Cell>
                <Cell $line>{r[10]}</Cell>
                <Cell $line>{r[9]}</Cell>
                <Cell $line>{r[8]}</Cell>
                <Cell $line>{r[7]}</Cell>
                <Cell $line $tight={r[6] === 'الإسكندرية'}>{r[6]}</Cell>
                <Cell $line $money>{M}{r[5]}</Cell>
                <Cell $line>{r[4]}</Cell>
                <Cell $line $money>{M}{r[3]}</Cell>
                <Cell $line $money>{M}{r[2]}</Cell>
                <Cell $line>{r[1]}</Cell>
                <Cell $line $last>{r[0]}</Cell>
                <Blanks n={3} k="r" />
                <RowHead>{11 + i}</RowHead>
              </SheetRow>
            );
          })}
        </Sheet>
      </SheetArea>

      <SheetBar>
        <HTrack><Tri d="l" /><HThumb /><Tri d="r" /></HTrack>
        <BarSlot $w={38}><Dots /></BarSlot>
        <Grow />
        <BarSlot $w={40}><svg width="16" height="16" viewBox="0 0 16 16" stroke="#444" strokeWidth="1.2"><path d="M8 0v16M0 8h16" /></svg></BarSlot>
        <Gap $w={41} />
        <BarSep />
        <SheetTab $w={128}>قاعدة البيانات</SheetTab>
        <BarSep />
        <Gap $w={3} />
        <SheetTab $w={106} $on>بيانات عملاء</SheetTab>
        <Gap $w={47} />
        <BarSlot $w={36}><svg width="8" height="14" viewBox="0 0 8 14" fill="none" stroke="#888"><path d="M7 1L1 7l6 6" /></svg></BarSlot>
        <BarSlot $w={36}><svg width="8" height="14" viewBox="0 0 8 14" fill="none" stroke="#888"><path d="M1 1l6 6-6 6" /></svg></BarSlot>
        <Gap $w={22} />
      </SheetBar>

      <StatusBar>
        <span>Ready</span>
        <Gap $w={29} />
        <A11y />
        <Gap $w={1} />
        <span>Accessibility: Good to go</span>
        <Grow />
        <ViewBtn $w={50} $on><ViewGrid /></ViewBtn>
        <ViewBtn $w={50}><ViewPage /></ViewBtn>
        <ViewBtn $w={42}><ViewBreak /></ViewBtn>
        <Gap $w={16} />
        <Glyph $s={14}>−</Glyph>
        <Gap $w={4} />
        <ZoomTrack><ZoomKnob /></ZoomTrack>
        <Gap $w={6} />
        <Glyph $s={15}>+</Glyph>
        <Pct>100%</Pct>
        <Gap $w={10} />
      </StatusBar>

      <Watermark>
        <MarkAr>مستقل</MarkAr>
        <MarkEn>mostaql.com</MarkEn>
      </Watermark>
    </Page>
  );
}
